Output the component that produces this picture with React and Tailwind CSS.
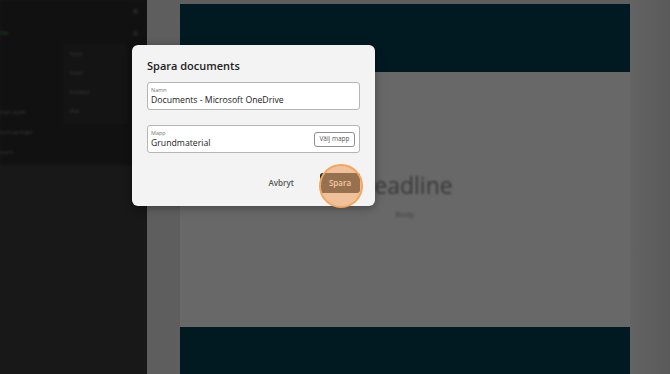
import React from "react";

export default function App() {
  const font = { fontFamily: '"Open Sans", "Noto Sans", sans-serif' };
  return (
    <div className="relative w-[670px] h-[374px] overflow-hidden flex bg-[#5d5d5d]" style={font}>
      {/* left panel */}
      <div className="w-[147px] h-full bg-[#181818] flex flex-col overflow-hidden">
        <div className="h-[165px] bg-[#111111] flex flex-col blur-[1px]">
          <div className="h-[22px] flex items-center justify-end pr-[9px]">
            <div className="w-[5px] h-[5px] rounded-full bg-[#262626]" />
          </div>
          <div className="h-[22px] flex items-center justify-between pr-[9px]">
            <span className="text-[6px] text-[#1f5a2c]">On</span>
            <div className="w-[5px] h-[5px] rounded-full bg-[#232323]" />
          </div>
          <div className="flex">
            <div className="w-[63px] flex flex-col pt-[63px] gap-[10px] text-[6px] leading-[10px] text-[#3a3a3a] whitespace-nowrap">
              <span>tion style</span>
              <span>lockup/logo</span>
              <span>ount</span>
            </div>
            <div className="w-[64px] h-[80px] bg-[#141414] flex flex-col pl-[7px] pt-[5px] gap-[9px] text-[6px] leading-[10px] text-[#3a3a3a]">
              <span>Fold</span>
              <span>Fold</span>
              <span>Folded</span>
              <span>Flat</span>
            </div>
          </div>
        </div>
      </div>

      {/* gap */}
      <div className="w-[33px] h-full bg-[#5e5e5e]" />

      {/* canvas */}
      <div className="w-[450px] h-full flex flex-col bg-[#686868]">
        <div className="h-[4px] bg-[#5e5e5e]" />
        <div className="h-[68px] bg-[#011a21]" />
        <div className="flex-1 flex flex-col items-center pt-[100px] blur-[0.8px]">
          <div className="text-[23px] font-medium leading-[26px] text-[#383838]">Headline</div>
          <div className="text-[8px] leading-[12px] mt-[10px] text-[#404040]">Body</div>
        </div>
        <div className="h-[47px] bg-[#011a21]" />
      </div>

      {/* right area */}
      <div className="flex-1 h-full bg-gradient-to-r from-[#636363] to-[#5a5a5a]" />

      {/* dialog */}
      <div className="absolute left-[132px] top-[45px] w-[243px] bg-[#f3f3f3] rounded-[6px] shadow-[0_2px_8px_rgba(0,0,0,0.35)] px-[15px] pt-[13px] pb-[13px] flex flex-col">
        <div className="text-[11px] leading-[16px] font-semibold text-[#222]">Spara documents</div>
        <div className="mt-[8px] h-[28px] bg-white border border-[#b5b5b5] rounded-[3px] px-[3px] pt-[4px] flex flex-col">
          <span className="text-[5.5px] leading-[7px] text-[#777]">Namn</span>
          <span className="text-[8.7px] leading-[12px] text-[#222]">Documents - Microsoft OneDrive</span>
        </div>
        <div className="mt-[15px] h-[28px] bg-white border border-[#b5b5b5] rounded-[3px] pl-[3px] pr-[4px] flex items-center justify-between">
          <div className="flex flex-col pt-[1px]">
            <span className="text-[5.5px] leading-[7px] text-[#777]">Mapp</span>
            <span className="text-[8.7px] leading-[12px] text-[#222]">Grundmaterial</span>
          </div>
          <div className="h-[15px] w-[41px] border border-[#8f8f8f] rounded-[3px] flex items-center justify-center text-[6.5px] text-[#555] bg-white">
            Välj mapp
          </div>
        </div>
        <div className="mt-[20px] flex items-center justify-end gap-[26px]">
          <span className="text-[8px] font-semibold text-[#555]">Avbryt</span>
          <div className="w-[40px] h-[20px] rounded-[3px] bg-[#0f2a35] flex items-center justify-center text-[8px] font-semibold text-white">
            Spara
          </div>
        </div>
      </div>

      {/* orange highlight circle */}
      <div className="absolute left-[319px] top-[164px] w-[44px] h-[44px] rounded-full bg-[#f0a060]/60 border-[2px] border-[#f3a65e]" />
    </div>
  );
}
